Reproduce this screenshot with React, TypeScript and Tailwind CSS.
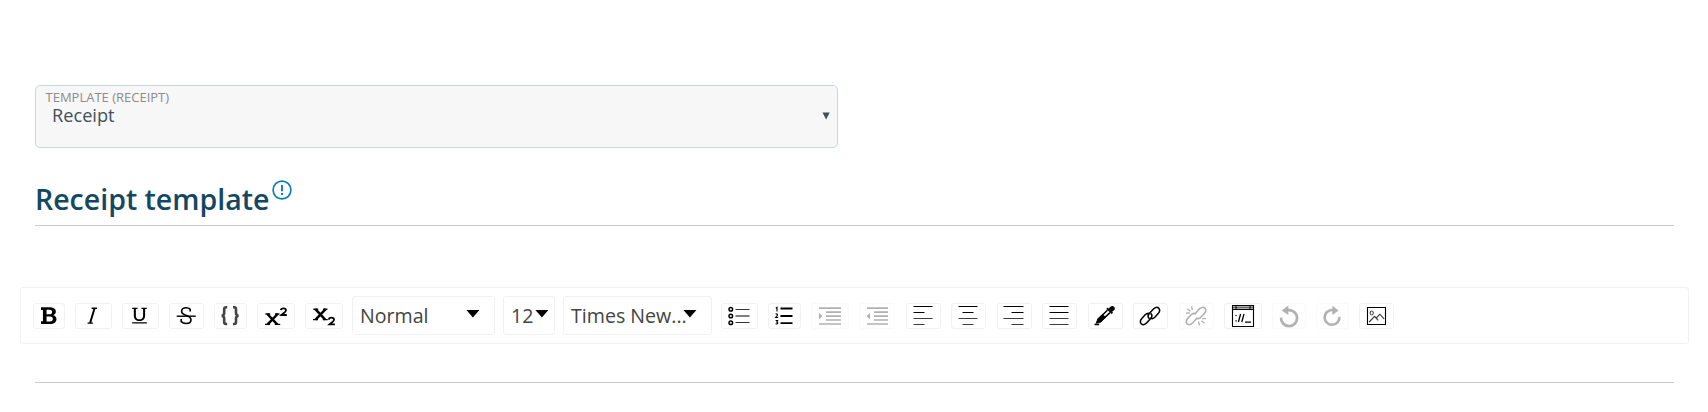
import type { ReactNode } from 'react';

function Icon({ children }: { children: ReactNode }) {
  return (
    <svg width="24" height="24" viewBox="0 0 24 24" fill="none" stroke="#000" className="shrink-0">
      {children}
    </svg>
  );
}

function Tool({ label, className, disabled, children }: { label: string; className: string; disabled?: boolean; children: ReactNode }) {
  return (
    <button
      aria-label={label}
      disabled={disabled}
      className={`flex h-[26px] shrink-0 items-center justify-center rounded-[3px] border border-[#f1f1f1] bg-white ${disabled ? 'opacity-30' : ''} ${className}`}
    >
      <Icon>{children}</Icon>
    </button>
  );
}

function Dropdown({ text, className }: { text: string; className: string }) {
  return (
    <button className={`flex h-[39px] shrink-0 items-center rounded-[3px] border border-[#f1f1f1] bg-white pl-[7px] text-left text-[19.6px] text-[#444] ${className}`}>
      <span className="min-w-0 flex-1 whitespace-nowrap">{text}</span>
      <svg width="14" height="8" viewBox="0 0 14 8" className="mb-1 shrink-0">
        <path d="M.4 0h13L6.9 7.6z" />
      </svg>
    </button>
  );
}

const chain = 'M11.2 14.6C9.6 13 9.8 11.2 11.3 9.6L15.2 5.3C16.8 3.4 19 2.7 20.6 4.1C22.2 5.7 21.8 7.7 20.2 9.5L16.8 13.2C15.2 14.8 13.4 15 12 13.8M12.8 9.4C14.4 11 14.2 12.8 12.7 14.4L8.8 18.7C7.2 20.6 5 21.3 3.4 19.9C1.8 18.3 2.2 16.3 3.8 14.5L7.2 10.8C8.8 9.2 10.6 9 12 10.2';

export default function App() {
  return (
    <main className="h-[412px] overflow-hidden bg-white pt-[85px] font-['Open_Sans',sans-serif]">
      <div className="ml-[35px] flex h-[63px] w-[803px] flex-col rounded-[5px] border border-[#c8d8e2] bg-[#f7f7f7]">
        <span className="mt-[2px] ml-[9.5px] text-[13px] leading-[18px] text-[#8c8c8c]">TEMPLATE (RECEIPT)</span>
        <div className="-mt-[3px] flex items-center justify-between pr-[7px] pl-[16px]">
          <span className="text-[18.2px] leading-[24px] text-[#3f505a]">Receipt</span>
          <svg width="8" height="8" viewBox="0 0 8 8" className="mt-0.5">
            <path d="M.5.5h7.2L4.1 7.5z" fill="#3f505a" />
          </svg>
        </div>
      </div>

      <div className="mr-[34px] ml-[35px] flex h-[78px] items-start border-b border-[#ccc] pt-[32px]">
        <h2 className="text-[28.5px] leading-[38px] font-semibold text-[#124862]">Receipt template</h2>
        <svg width="20" height="20" viewBox="0 0 20 20" fill="none" stroke="#0b7fb5" className="ml-[3px]">
          <circle cx="10" cy="10" r="8.9" strokeWidth="1.7" />
          <path d="M10 5v6.2M10 13v2" strokeWidth="1.9" />
        </svg>
      </div>

      <div className="mt-[61px] mr-[19px] ml-[20px] flex h-[57px] items-center rounded-[3px] border border-[#f1f1f1] pl-[12px]">
        <Tool label="Bold" className="w-[32px]">
          <path transform="translate(4 3.2) scale(1.29)" fill="#000" stroke="none" d="M6.236 0c1.652 0 2.94.298 3.866.893.925.595 1.388 1.485 1.388 2.669 0 .601-.173 1.139-.516 1.61-.343.474-.844.83-1.499 1.068.843.167 1.474.523 1.895 1.071.419.55.63 1.183.63 1.903 0 1.245-.444 2.187-1.33 2.825-.886.641-2.144.961-3.769.961H0v-2.167h1.494V2.167H0V0h6.236zM4.308 5.446h2.024c.752 0 1.33-.143 1.734-.43.405-.285.608-.701.608-1.25 0-.6-.204-1.044-.612-1.33-.408-.286-1.016-.427-1.826-.427H4.308v3.437zm0 1.804V11h2.593c.747 0 1.314-.152 1.707-.452.39-.3.588-.745.588-1.334 0-.636-.168-1.124-.5-1.46-.336-.335-.864-.504-1.582-.504H4.308z" />
        </Tool>
        <Tool label="Italic" className="ml-[10px] w-[37px] pr-px">
          <path transform="translate(1.1 .8) scale(1.36)" fill="#000" stroke="none" d="M7 3V2h4v1H9.753l-3 10H8v1H4v-1h1.247l3-10H7z" />
        </Tool>
        <Tool label="Underline" className="ml-[10px] w-[37px] pr-px">
          <path transform="translate(1.5 1) scale(1.33)" fill="#000" stroke="none" d="M6.045 2v.992L4.785 3v5.172c0 .859.243 1.512.727 1.957s1.124.668 1.918.668c.836 0 1.509-.221 2.019-.664.511-.442.766-1.096.766-1.96V3l-1.26-.008V2H13v.992L11.739 3v5.172c0 1.234-.398 2.181-1.195 2.84-.797.659-1.835.988-3.114.988-1.242 0-2.248-.329-3.017-.988-.769-.659-1.152-1.606-1.152-2.84V3L2 2.992V2h4.045zM2 13h11v1H2z" />
        </Tool>
        <Tool label="Strikethrough" className="ml-[10px] w-[35px] pr-px">
          <path d="M16.2 7.6V5.3C15.2 4.2 13.8 3.7 12 3.7C9.3 3.7 7.6 5 7.6 7.2C7.6 9.2 9 10.2 11.8 11.2C15.4 12.4 17 13.6 17 15.8C17 18 15 19.5 12.2 19.5C10.1 19.5 8.3 18.8 7.2 17.6V15" strokeWidth="1.6" />
          <path d="M2.7 12.2h19" strokeWidth="1.4" />
        </Tool>
        <Tool label="Monospace" className="ml-[10px] w-[33px] pr-px">
          <path d="M9.2 3.2H8C6.6 3.2 6.2 3.9 6.2 5V8.8C6.2 10.6 5.6 11.6 3.6 11.7C5.6 11.8 6.2 12.8 6.2 14.6V18C6.2 19.4 6.6 20 8 20H9.2M15 3.2H16.2C17.6 3.2 18 3.9 18 5V8.8C18 10.6 18.6 11.6 20.6 11.7C18.6 11.8 18 12.8 18 14.6V18C18 19.4 17.6 20 16.2 20H15" stroke="#444" strokeWidth="2.6" />
        </Tool>
        <Tool label="Superscript" className="ml-[10px] w-[38px]">
          <path d="M3.4 10l9.8 10.4M13.6 10L3.6 20.4" strokeWidth="2.5" />
          <path d="M1.4 10h4.8M11 10h4.4M1 20.4h5M10.8 20.4h5.4" strokeWidth="1.4" />
          <path d="M16.8 6.2C17 4.7 18 4.3 19.5 4.3C21 4.3 22 5 22 6.3C22 8 19.5 9 17.4 11H22.8" strokeWidth="1.8" />
        </Tool>
        <Tool label="Subscript" className="ml-[10px] w-[38px]">
          <path d="M3.4 5.2l9.8 10.4M13.6 5.2L3.6 15.6" strokeWidth="2.5" />
          <path d="M1.4 5.2h4.8M11 5.2h4.4M1 15.6h5M10.8 15.6h5" strokeWidth="1.4" />
          <path d="M16.8 15.6C17 14.1 18 13.7 19.5 13.7C21 13.7 22 14.4 22 15.7C22 17.4 19.5 18.4 17.4 20.4H22.9" strokeWidth="1.8" />
        </Tool>

        <Dropdown text="Normal" className="ml-[9px] w-[143px] pr-[14px]" />
        <Dropdown text="12" className="ml-[8px] w-[52px] pr-[5px]" />
        <Dropdown text="Times New..." className="ml-[8px] w-[149px] pr-[14px]" />

        <Tool label="Unordered list" className="ml-[9px] w-[37px] pr-px">
          <g strokeWidth="1.5"><circle cx="3.8" cy="5.3" r="1.8" /><circle cx="3.8" cy="12" r="1.8" /><circle cx="3.8" cy="18.8" r="1.8" /></g>
          <path d="M8.5 5.5h14M8.5 18.5h14" stroke="#333" strokeWidth="1" />
          <path d="M8.5 12h14" stroke="#808080" strokeWidth="2" />
        </Tool>
        <Tool label="Ordered list" className="ml-[10px] w-[33px] pr-px">
          <path d="M3.8 4.2l1.2-.8v4M3.6 10.2c1.4-1 2.6.4 1.4 1.6l-1.4 1.7h2.6M3.6 16.5h2L4.7 18c2 .2 1.3 2.6-1.1 1.8" strokeWidth="1.1" />
          <path d="M8.5 4.5h12M8.5 12h12M8.5 19.2h12" strokeWidth="1.8" />
        </Tool>
        <Tool label="Indent" disabled className="ml-[10px] w-[38px]">
          <path d="M1 4.2h22M8 8.2h15M8 12.2h15M8 16h15M1 20h22" strokeWidth="1.7" />
          <path d="M1 9l3.4 3.1L1 15.4z" fill="#000" stroke="none" />
        </Tool>
        <Tool label="Outdent" disabled className="ml-[10px] w-[36px]">
          <path d="M2 4.2h21M9 8.2h14M9 12.2h14M9 16h14M2 20h21" strokeWidth="1.7" />
          <path d="M5 9l-3.4 3.1L5 15.4z" fill="#000" stroke="none" />
        </Tool>
        <Tool label="Align left" className="ml-[11px] w-[35px] pr-px">
          <path d="M2.5 2.5h19M2.5 8.5h11" />
          <path d="M2.5 14.5h19M2.5 20.5h11" stroke="#3c3c3c" />
        </Tool>
        <Tool label="Align center" className="ml-[10px] w-[35px] pr-px">
          <path d="M2.5 2.5h19M6.5 8.5h11" />
          <path d="M2.5 14.5h19M6.5 20.5h11" stroke="#3c3c3c" />
        </Tool>
        <Tool label="Align right" className="ml-[11px] w-[35px] pr-px">
          <path d="M1.5 2.5h20M9.5 8.5h12" />
          <path d="M1.5 14.5h20M9.5 20.5h12" stroke="#3c3c3c" />
        </Tool>
        <Tool label="Justify" className="ml-[10px] w-[35px] pr-px">
          <path d="M2.5 2.5h19M2.5 8.5h19" />
          <path d="M2.5 14.5h19M2.5 20.5h19" stroke="#3c3c3c" />
        </Tool>
        <Tool label="Color picker" className="ml-[11px] w-[35px] pr-px">
          <path d="M18.4 5.2L19.2 4.6" strokeWidth="5" strokeLinecap="round" />
          <path d="M14 4.2l5.4 5.2" strokeWidth="2" />
          <path d="M14.4 6.2L5.2 15.2L4.2 18.4L7.4 17.6L17 8.6" strokeWidth="1.5" />
          <path d="M9 10.8L12.6 13L8 17.8L3.6 18.8L4.8 15z" fill="#000" />
          <path d="M1.6 20.4h4.6" strokeWidth="1.7" />
        </Tool>
        <Tool label="Link" className="ml-[10px] w-[35px] pr-px">
          <path d={chain} strokeWidth="1.5" />
        </Tool>
        <Tool label="Unlink" disabled className="ml-[11px] w-[35px] pr-[2px]">
          <path d="M11.5 9.3L15 5.4C16.8 3.4 19.2 2.6 20.8 4.1C22.4 5.7 21.9 7.8 20.2 9.6L16.8 13.2C15.3 14.8 13.5 15.1 12 13.8M12.4 14.7L8.8 18.7C7 20.6 4.9 21.3 3.3 19.9C1.7 18.3 2.2 16.2 3.8 14.4L7.2 10.8C8.8 9.2 10.6 9 12 10.2" strokeWidth="1.6" />
          <path d="M3.2 4.8l3.2 2.4M7.5 2.5l1 3.5M2.2 9h3.4M20.5 19.2l-3.2-2.4M15.5 21.2l-1-3.6M18.2 14.6h3.8" strokeWidth="1.4" />
        </Tool>
        <Tool label="Embedded" className="ml-[10px] w-[38px]">
          <path d="M1.5 1.5h21v21h-21z" strokeWidth="1.1" />
          <path d="M2 3.5h20" stroke="#666" strokeWidth="2" />
          <path d="M2 5.5h20M5 2v3M19 2v3" strokeWidth="1" />
          <path d="M4.4 11.5h1.3M4.4 16.8h1.3M14 18.2h6" strokeWidth="1.2" />
          <path d="M9.6 10L7.4 18M13 10L10.8 18" strokeWidth="1.3" />
        </Tool>
        <Tool label="Undo" disabled className="ml-[10px] w-[34px]">
          <path d="M4.1 13.6A8 8 0 1 0 12 6.2H10.5" strokeWidth="2.7" />
          <path d="M4.6 6.4L11.4 1.6V11z" fill="#000" stroke="none" />
        </Tool>
        <Tool label="Redo" disabled className="ml-[10px] w-[33px] pr-px">
          <path d="M19.4 12.8A7.4 7.4 0 1 1 12 6H13.6" strokeWidth="2.6" />
          <path d="M18.6 6.5L12.4 1.8V11z" fill="#000" stroke="none" />
        </Tool>
        <Tool label="Image" className="ml-[10px] w-[35px] pr-px">
          <path d="M3.5 3.5h18v17h-18z" strokeWidth="1.1" />
          <ellipse cx="7.7" cy="9" rx="1.6" ry="2" stroke="#333" strokeWidth="1" />
          <path d="M5.2 18L10.6 12.4L14.2 16.4M12.2 14.2L15.8 10.2L20.2 14.8" stroke="#333" strokeWidth="1.1" />
        </Tool>
      </div>

      <hr className="mt-[38px] mr-[34px] ml-[35px] border-t border-[#ccc]" />
    </main>
  );
}
